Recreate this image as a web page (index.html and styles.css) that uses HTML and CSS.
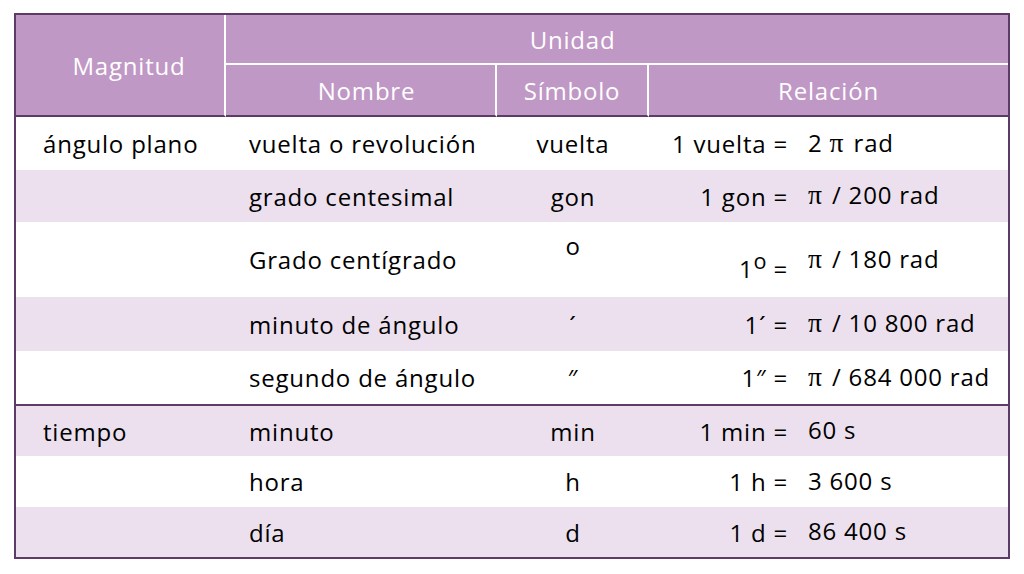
FILE: index.html
```html
<!DOCTYPE html>
<html lang="es">
<head>
<meta charset="utf-8">
<title>Unidades</title>
<link rel="stylesheet" href="styles.css">
</head>
<body>
<table class="units">
  <colgroup>
    <col class="c-mag"><col class="c-name"><col class="c-sym"><col class="c-rel-l"><col class="c-rel-r">
  </colgroup>
  <thead>
    <tr class="h1">
      <th rowspan="2" class="mag">Magnitud</th>
      <th colspan="4" class="unidad">Unidad</th>
    </tr>
    <tr class="h2">
      <th class="nombre">Nombre</th>
      <th class="simbolo">Símbolo</th>
      <th colspan="2" class="relacion">Relación</th>
    </tr>
  </thead>
  <tbody>
    <tr class="r1">
      <td class="mg">ángulo plano</td><td class="nm">vuelta o revolución</td><td class="sy">vuelta</td>
      <td class="rl">1 vuelta =</td><td class="rr">2 <span class="pi">π</span> rad</td>
    </tr>
    <tr class="r2 alt">
      <td class="mg"></td><td class="nm">grado centesimal</td><td class="sy">gon</td>
      <td class="rl">1 gon =</td><td class="rr"><span class="pi">π</span> / 200 rad</td>
    </tr>
    <tr class="r3">
      <td class="mg"></td><td class="nm">Grado centígrado</td><td class="sy sy-deg"><span class="deg">o</span></td>
      <td class="rl rl-deg">1<span class="sup">o</span> =</td><td class="rr"><span class="pi">π</span> / 180 rad</td>
    </tr>
    <tr class="r4 alt">
      <td class="mg"></td><td class="nm">minuto de ángulo</td><td class="sy">´</td>
      <td class="rl">1´ =</td><td class="rr"><span class="pi">π</span> / 10 800 rad</td>
    </tr>
    <tr class="r5">
      <td class="mg"></td><td class="nm">segundo de ángulo</td><td class="sy">″</td>
      <td class="rl">1″ =</td><td class="rr"><span class="pi">π</span> / 684 000 rad</td>
    </tr>
    <tr class="r6 alt group-start">
      <td class="mg">tiempo</td><td class="nm">minuto</td><td class="sy">min</td>
      <td class="rl">1 min =</td><td class="rr">60 s</td>
    </tr>
    <tr class="r7">
      <td class="mg"></td><td class="nm">hora</td><td class="sy">h</td>
      <td class="rl">1 h =</td><td class="rr">3 600 s</td>
    </tr>
    <tr class="r8 alt">
      <td class="mg"></td><td class="nm">día</td><td class="sy">d</td>
      <td class="rl">1 d =</td><td class="rr">86 400 s</td>
    </tr>
  </tbody>
</table>
</body>
</html>
```

FILE: styles.css
```css
html, body {
  margin: 0;
  padding: 0;
  background: #ffffff;
}

body {
  padding: 13px 0 0 14px;
  font-family: "Open Sans", "Noto Sans", sans-serif;
  font-size: 24px;
  letter-spacing: 0.8px;
  color: #000000;
}

.units {
  width: 996px;
  table-layout: fixed;
  border-collapse: separate;
  border-spacing: 0;
  border: 2px solid #5c3b66;
}

.c-mag { width: 210px; }
.c-name { width: 271px; }
.c-sym { width: 152px; }
.c-rel-l { width: 149px; }
.c-rel-r { width: 210px; }

th, td {
  padding: 0;
  vertical-align: middle;
  white-space: nowrap;
}

thead th {
  background: #bf98c5;
  color: #ffffff;
  font-weight: normal;
  text-align: center;
}

.h1 { height: 50px; }
.h2 { height: 52px; }

.mag {
  padding-left: 18px;
  border-right: 2px solid #ffffff;
  border-bottom: 2px solid #5c3b66;
}

.unidad {
  padding-right: 89px;
  border-bottom: 2px solid #ffffff;
}

.h2 th {
  border-bottom: 2px solid #5c3b66;
}

.nombre {
  padding-left: 12px;
}

.nombre,
.simbolo {
  border-right: 2px solid #ffffff;
}

tbody tr { background: #ffffff; }
tbody tr.alt { background: #ece0ee; }

.r1 { height: 53px; }
.r2 { height: 52px; }
.r3 { height: 75px; }
.r4 { height: 54px; }
.r5 { height: 53px; }
.r6 { height: 52px; }
.r7 { height: 51px; }
.r8 { height: 50px; }

.group-start td {
  border-top: 2px solid #5c3b66;
}

.mg { padding-left: 27px; }
.nm { padding-left: 23px; }
.sy { text-align: center; }
.rl { text-align: right; padding-right: 10px; }
.rr { padding-left: 10px; padding-bottom: 3px; }

.pi {
  font-family: "Liberation Serif", serif;
  font-size: 1.15em;
  line-height: 1;
  letter-spacing: 0;
  margin-right: 3px;
}

.sy-deg {
  vertical-align: top;
  padding-top: 7px;
}

.rl-deg {
  padding-top: 12px;
}

.sup {
  font-size: 0.9em;
  vertical-align: 0.4em;
  letter-spacing: 0;
}
```
